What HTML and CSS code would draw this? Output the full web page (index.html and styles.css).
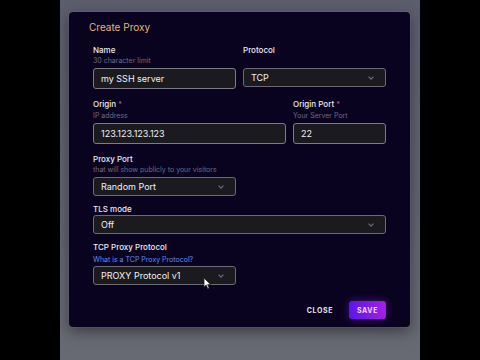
FILE: index.html
```html
<!DOCTYPE html>
<html lang="en">
<head>
    <meta charset="UTF-8">
    <meta name="viewport" content="width=device-width, initial-scale=1.0">
    <title>Create Proxy</title>
    <link rel="stylesheet" href="styles.css">
</head>
<body>
    <div class="stage">
        <div class="modal">
            <h1 class="modal-title">Create Proxy</h1>

            <div class="form">
                <div class="row">
                    <div class="field w-half">
                        <label>Name</label>
                        <span class="hint">30 character limit</span>
                        <div class="input">my SSH server</div>
                    </div>
                    <div class="field w-half">
                        <label>Protocol</label>
                        <span class="hint">&nbsp;</span>
                        <div class="select">TCP <span class="chev"></span></div>
                    </div>
                </div>

                <div class="row">
                    <div class="field w-origin">
                        <label>Origin <span class="req">*</span></label>
                        <span class="hint">IP address</span>
                        <div class="input">123.123.123.123</div>
                    </div>
                    <div class="field w-port">
                        <label>Origin Port <span class="req">*</span></label>
                        <span class="hint">Your Server Port</span>
                        <div class="input">22</div>
                    </div>
                </div>

                <div class="row">
                    <div class="field w-half">
                        <label>Proxy Port</label>
                        <span class="hint">that will show publicly to your visitors</span>
                        <div class="select">Random Port <span class="chev"></span></div>
                    </div>
                </div>

                <div class="row">
                    <div class="field w-full">
                        <label>TLS mode</label>
                        <div class="select">Off <span class="chev"></span></div>
                    </div>
                </div>

                <div class="row">
                    <div class="field w-half">
                        <label>TCP Proxy Protocol</label>
                        <a class="link" href="#">What is a TCP Proxy Protocol?</a>
                        <div class="select">PROXY Protocol v1 <span class="chev"></span></div>
                    </div>
                </div>
            </div>

            <div class="actions">
                <button class="btn btn-text">Close</button>
                <button class="btn btn-primary">Save</button>
            </div>

            <!-- курсор мыши -->
            <svg class="cursor" width="9" height="13" viewBox="0 0 9 13">
                <path d="M1 1 L1 10 L3.2 8 L4.8 11.8 L6.2 11.2 L4.7 7.6 L7.6 7.6 Z" fill="#fff" stroke="#222" stroke-width="0.8"/>
            </svg>
        </div>
    </div>
</body>
</html>
```

FILE: styles.css
```css
:root {
    --modal-bg: #0a0320;
    --field-bg: #1b1a1f;
    --field-border: #7d7c86;
    --label: #eceaf2;
    --hint: #6e6b80;
    --title: #e9b374;
    --link: #5f8ff0;
}

body {
    margin: 0;
    padding: 0;
    background: #000;
    font-family: "Inter", "Noto Sans", sans-serif;
    color: var(--label);
    display: flex;
    justify-content: center;
    height: 360px;
    overflow: hidden;
}

/* Затемнённый фон под модалкой */
.stage {
    width: 360px;
    height: 360px;
    background: linear-gradient(#5c5e6e, #676a72);
    padding: 12px 0 0 9px;
    box-sizing: border-box;
}

.modal {
    position: relative;
    width: 341px;
    height: 315px;
    box-sizing: border-box;
    padding: 8px 24px 0 20px;
    background: var(--modal-bg);
    border-radius: 4px;
    box-shadow: 0 0 0 1px rgba(255, 255, 255, 0.06), 0 4px 14px rgba(0, 0, 0, 0.45);
}

.modal-title {
    margin: 0 0 10px 0;
    font-size: 10px;
    line-height: 14px;
    font-weight: 400;
    color: var(--title);
}

.form {
    padding-left: 4px;
    display: flex;
    flex-direction: column;
    gap: 7px;
}

.row {
    display: flex;
    gap: 7px;
}

/* первые два ряда чуть свободнее */
.row:nth-child(-n+2) {
    margin-bottom: 2px;
}

.field {
    display: flex;
    flex-direction: column;
}

.w-half { width: 143px; }
.w-origin { width: 193px; }
.w-port { width: 93px; }
.w-full { width: 293px; }

.field label {
    font-size: 8px;
    line-height: 12px;
    font-weight: 500;
    color: var(--label);
}

.req {
    color: #b4627a;
    font-size: 7px;
}

.hint {
    font-size: 7px;
    line-height: 10px;
    color: var(--hint);
    margin-bottom: 2px;
    white-space: nowrap;
}

.link {
    font-size: 7px;
    line-height: 11px;
    color: var(--link);
    text-decoration: none;
    margin: 1px 0 1px;
}

.input,
.select {
    position: relative;
    height: 21px;
    box-sizing: border-box;
    padding: 0 7px;
    display: flex;
    align-items: center;
    font-size: 9px;
    color: #f2f2f4;
    background: var(--field-bg);
    border: 1px solid var(--field-border);
    border-radius: 3px;
}

.select {
    height: 19px;
    border-color: #6c6b74;
}

/* Стрелка выпадающего списка */
.chev {
    position: absolute;
    right: 12px;
    top: 6px;
    width: 3px;
    height: 3px;
    border-right: 1px solid #75747f;
    border-bottom: 1px solid #75747f;
    transform: rotate(45deg);
}

.actions {
    display: flex;
    justify-content: flex-end;
    align-items: center;
    gap: 16px;
    margin-top: 16px;
}

.btn {
    font-family: "Inter", "Noto Sans", sans-serif;
    font-size: 7px;
    font-weight: 700;
    letter-spacing: 0.6px;
    text-transform: uppercase;
    border: none;
    cursor: pointer;
}

.btn-text {
    background: none;
    color: #e6e4ee;
    padding: 0;
}

.btn-primary {
    width: 37px;
    height: 18px;
    padding: 0;
    border-radius: 3px;
    color: #f3d6ff;
    background: linear-gradient(90deg, #5a17ea, #a51fe2);
    box-shadow: 0 0 8px rgba(140, 40, 230, 0.45);
}

.cursor {
    position: absolute;
    left: 134px;
    top: 265px;
}
```
